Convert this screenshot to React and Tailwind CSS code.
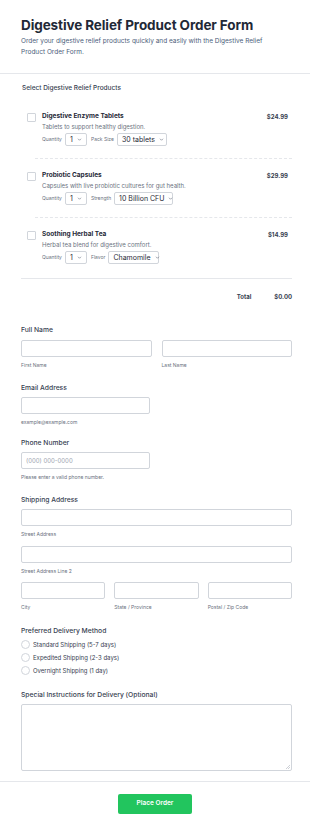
import React from "react";

const F = { fontFamily: "Inter, 'Liberation Sans', sans-serif" };

function Chevron() {
  return (
    <svg width="5" height="5" viewBox="0 0 10 10" className="ml-[4px] shrink-0">
      <path d="M2 3.5 L5 6.5 L8 3.5" fill="none" stroke="#6b7280" strokeWidth="1.3" />
    </svg>
  );
}

function Sel({ value, w }) {
  return (
    <div className={`flex items-center justify-between h-[13px] border border-[#d1d5db] rounded-[2px] px-[4px] whitespace-nowrap ${w}`}>
      <span className="text-[7px] text-[#1f2937] leading-none">{value}</span>
      <Chevron />
    </div>
  );
}

function Product({ name, desc, price, optLabel, optValue, optW }) {
  return (
    <div className="flex pl-[6px] pt-[12px] pb-[12px]">
      <div className="w-[9px] h-[9px] border border-[#d1d5db] rounded-[1px] bg-white mt-[1px] shrink-0" />
      <div className="ml-[6px] flex-1">
        <div className="flex justify-between">
          <div className="text-[6.5px] font-bold text-[#1f2937] leading-[9px]">{name}</div>
          <div className="text-[6px] font-bold text-[#374151] leading-[9px] mr-[4px]">{price}</div>
        </div>
        <div className="text-[6px] text-[#6b7280] leading-[8px] mt-[2px]">{desc}</div>
        <div className="flex items-center mt-[2px]">
          <span className="text-[5px] text-[#6b7280] mr-[3px]">Quantity</span>
          <Sel value="1" w="w-[22px]" />
          <span className="text-[5px] text-[#6b7280] ml-[4px] mr-[3px]">{optLabel}</span>
          <Sel value={optValue} w={optW} />
        </div>
      </div>
    </div>
  );
}

function Label({ children, className = "" }) {
  return <div className={`text-[6.75px] font-medium text-[#374151] leading-[9px] ${className}`}>{children}</div>;
}
function Sub({ children, className = "" }) {
  return <div className={`text-[5px] text-[#6b7280] leading-[6px] mt-[5px] ${className}`}>{children}</div>;
}
function Input({ className = "", placeholder }) {
  return (
    <div className={`h-[17px] border border-[#d1d5db] rounded-[2px] bg-white flex items-center px-[4px] ${className}`}>
      {placeholder && <span className="text-[6px] text-[#9ca3af]">{placeholder}</span>}
    </div>
  );
}
function Radio({ children }) {
  return (
    <div className="flex items-center h-[13px]">
      <div className="w-[9px] h-[9px] rounded-full border border-[#d1d5db] bg-white" />
      <span className="ml-[3px] text-[6px] text-[#374151]">{children}</span>
    </div>
  );
}

export default function App() {
  return (
    <div style={F} className="w-[310px] h-[830px] bg-white overflow-hidden">
      <div className="pl-[21px] pr-[18px] pt-[15px] pb-[15px] border-b border-[#e5e7eb]">
        <h1 className="text-[13.5px] font-bold tracking-[-0.1px] text-[#1f2937] leading-[20px] whitespace-nowrap">Digestive Relief Product Order Form</h1>
        <p className="text-[6.5px] text-[#4b5d7a] leading-[11px] mt-[1px]">
          Order your digestive relief products quickly and easily with the Digestive Relief
          <br />
          Product Order Form.
        </p>
      </div>
      <div className="pl-[21px] pr-[18px] pt-[10px]">
        <div className="text-[6.5px] font-medium text-[#374151] leading-[8px] ml-[1px]">Select Digestive Relief Products</div>
        <div className="mt-[8px]">
          <Product name="Digestive Enzyme Tablets" desc="Tablets to support healthy digestion." price="$24.99" optLabel="Pack Size" optValue="30 tablets" optW="w-[50px]" />
          <div className="ml-[14px] border-t border-dashed border-[#e5e7eb]" />
          <Product name="Probiotic Capsules" desc="Capsules with live probiotic cultures for gut health." price="$29.99" optLabel="Strength" optValue="10 Billion CFU" optW="w-[59px]" />
          <div className="ml-[14px] border-t border-dashed border-[#e5e7eb]" />
          <Product name="Soothing Herbal Tea" desc="Herbal tea blend for digestive comfort." price="$14.99" optLabel="Flavor" optValue="Chamomile" optW="w-[51px]" />
          <div className="border-t border-[#e5e7eb] mt-[2px]" />
        </div>
        <div className="flex justify-end items-center h-[35px] text-[6px] font-bold text-[#374151]">
          <span className="mr-[23px]">Total</span>
          <span>$0.00</span>
        </div>

        <div className="mt-[11px]">
          <Label>Full Name</Label>
          <div className="flex gap-[10px] mt-[6px]">
            <div className="flex-1"><Input /><Sub>First Name</Sub></div>
            <div className="flex-1"><Input /><Sub>Last Name</Sub></div>
          </div>
        </div>
        <div className="mt-[15px]">
          <Label>Email Address</Label>
          <Input className="w-[129px] mt-[5px]" />
          <Sub>example@example.com</Sub>
        </div>
        <div className="mt-[13px]">
          <Label>Phone Number</Label>
          <Input className="w-[129px] mt-[5px]" placeholder="(000) 000-0000" />
          <Sub>Please enter a valid phone number.</Sub>
        </div>
        <div className="mt-[15px]">
          <Label>Shipping Address</Label>
          <Input className="mt-[5px]" />
          <Sub>Street Address</Sub>
          <Input className="mt-[9px]" />
          <Sub>Street Address Line 2</Sub>
          <div className="flex gap-[9px] mt-[8px]">
            <div className="flex-1"><Input /><Sub>City</Sub></div>
            <div className="flex-1"><Input /><Sub>State / Province</Sub></div>
            <div className="flex-1"><Input /><Sub>Postal / Zip Code</Sub></div>
          </div>
        </div>
        <div className="mt-[16px]">
          <Label>Preferred Delivery Method</Label>
          <div className="mt-[3px]">
            <Radio>Standard Shipping (5-7 days)</Radio>
            <Radio>Expedited Shipping (2-3 days)</Radio>
            <Radio>Overnight Shipping (1 day)</Radio>
          </div>
        </div>
        <div className="mt-[13px]">
          <Label>Special Instructions for Delivery (Optional)</Label>
          <div className="mt-[5px] h-[67px] border border-[#d1d5db] rounded-[2px] bg-white relative">
            <svg width="4" height="4" viewBox="0 0 4 4" className="absolute right-[1px] bottom-[1px]">
              <path d="M4 0 L0 4 M4 2 L2 4" stroke="#9ca3af" strokeWidth="0.5" />
            </svg>
          </div>
        </div>
      </div>
      <div className="mt-[10px] border-t border-[#e5e7eb] flex justify-center pt-[12px]">
        <button className="w-[74px] h-[20px] bg-[#22c55e] rounded-[2px] text-white text-[6.5px] font-semibold">Place Order</button>
      </div>
    </div>
  );
}
